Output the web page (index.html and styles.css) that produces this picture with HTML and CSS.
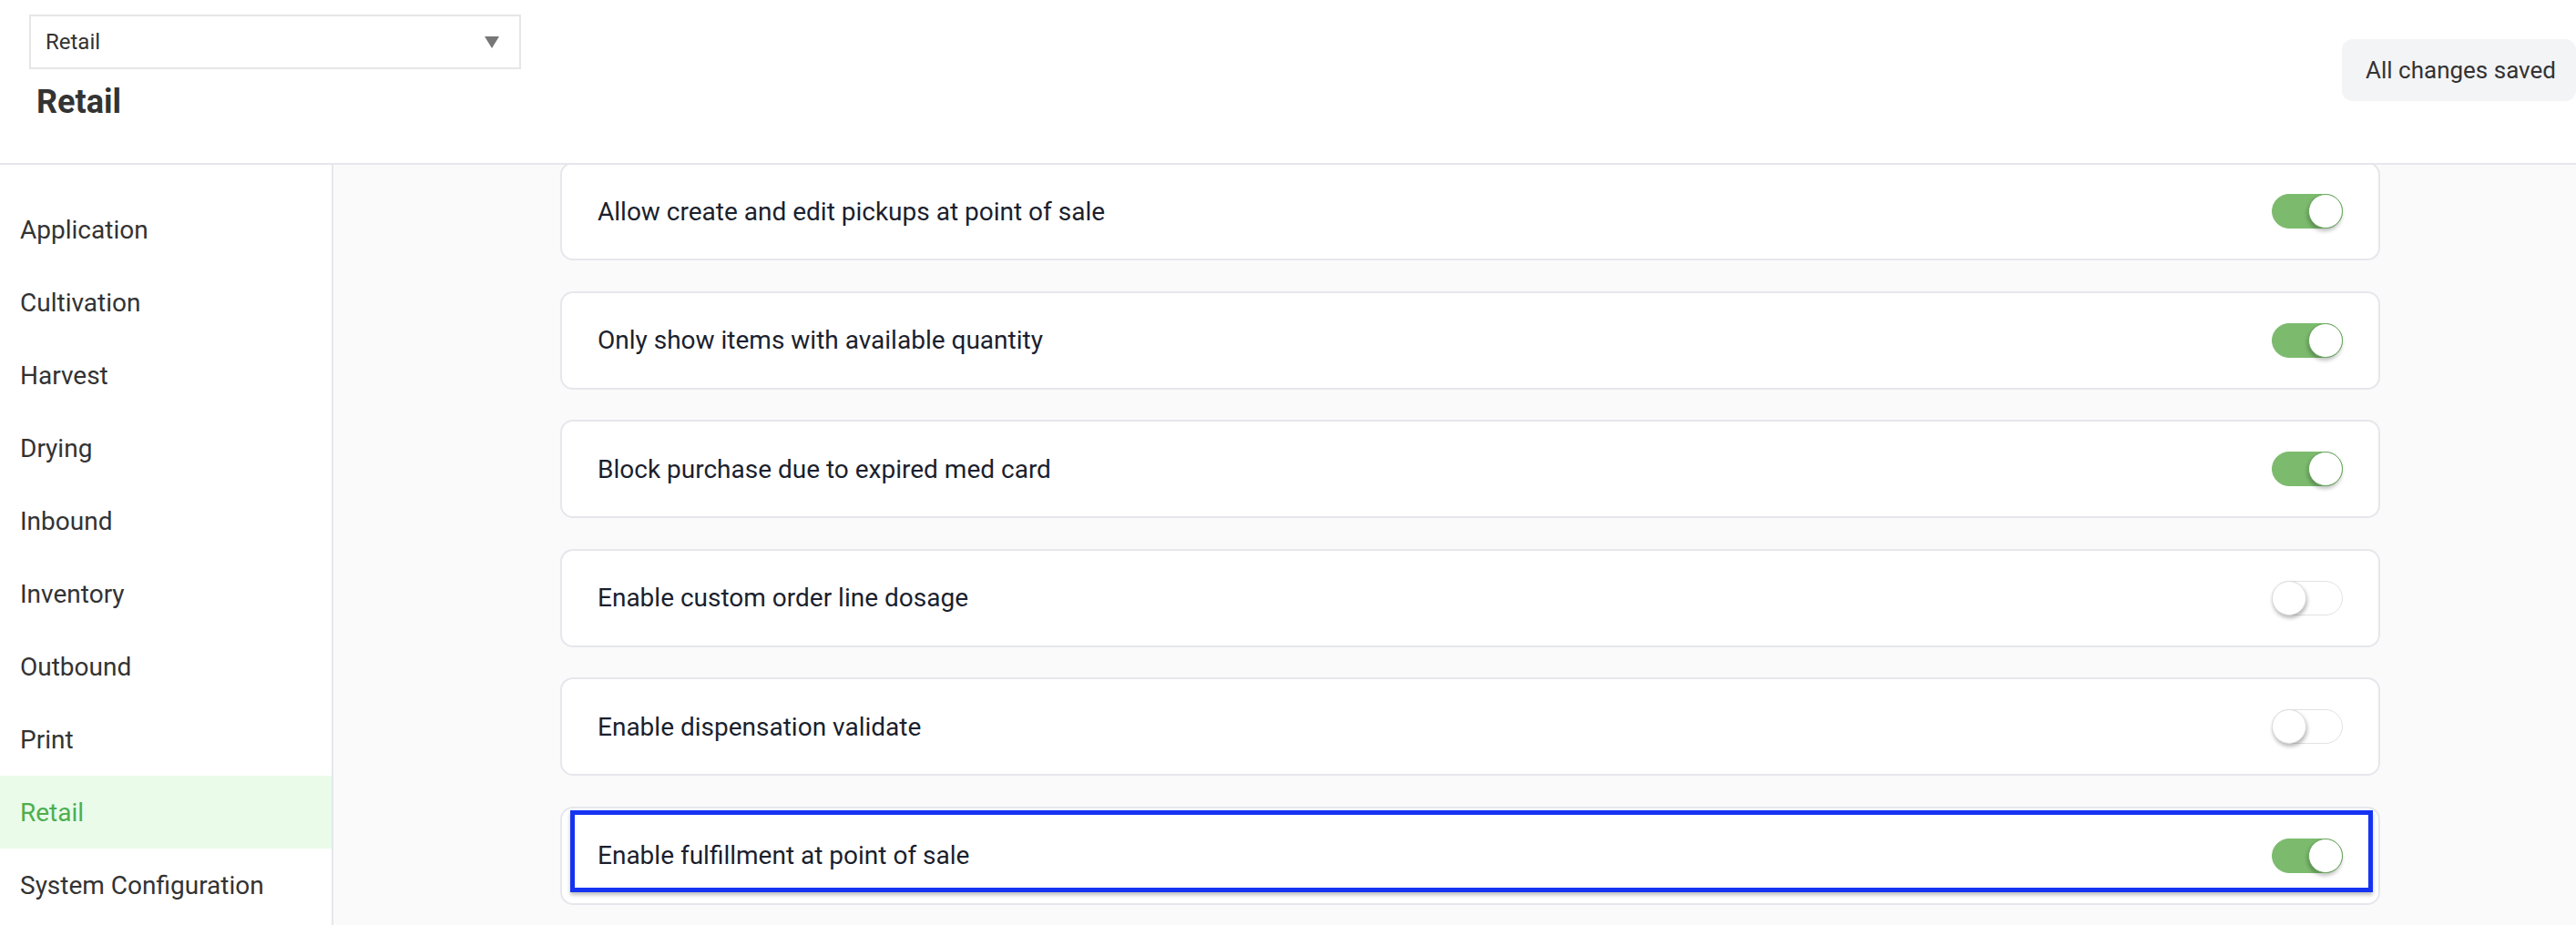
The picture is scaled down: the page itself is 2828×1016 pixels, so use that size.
FILE: index.html
```html
<html>
<head>
  <title>Settings - Retail</title>
  <link rel="stylesheet" href="styles.css">
</head>
<body>
  <div class="header">
    <div class="header-left">
      <div class="select">
        <span class="select-value">Retail</span>
        <span class="select-arrow"></span>
      </div>
      <div class="page-title">Retail</div>
    </div>
    <div class="save-state">All changes saved</div>
  </div>

  <div class="body">
    <div class="sidebar">
      <div class="nav-item">Application</div>
      <div class="nav-item">Cultivation</div>
      <div class="nav-item">Harvest</div>
      <div class="nav-item">Drying</div>
      <div class="nav-item">Inbound</div>
      <div class="nav-item">Inventory</div>
      <div class="nav-item">Outbound</div>
      <div class="nav-item">Print</div>
      <div class="nav-item active">Retail</div>
      <div class="nav-item">System Configuration</div>
    </div>

    <div class="main">
      <div class="settings">
        <div class="setting">
          <span class="label">Allow create and edit pickups at point of sale</span>
          <span class="switch on"><span class="knob"></span></span>
        </div>
        <div class="setting">
          <span class="label">Only show items with available quantity</span>
          <span class="switch on"><span class="knob"></span></span>
        </div>
        <div class="setting">
          <span class="label">Block purchase due to expired med card</span>
          <span class="switch on"><span class="knob"></span></span>
        </div>
        <div class="setting">
          <span class="label">Enable custom order line dosage</span>
          <span class="switch"><span class="knob"></span></span>
        </div>
        <div class="setting">
          <span class="label">Enable dispensation validate</span>
          <span class="switch"><span class="knob"></span></span>
        </div>
        <div class="setting focused">
          <span class="label">Enable fulfillment at point of sale</span>
          <span class="switch on"><span class="knob"></span></span>
          <span class="focus-ring"></span>
        </div>
      </div>
    </div>
  </div>
</body>
</html>
```

FILE: styles.css
```css
html, body {
  margin: 0;
  height: 100%;
}

body {
  font-family: Roboto, "Liberation Sans", sans-serif;
  background: #ffffff;
  color: #333333;
  display: flex;
  flex-direction: column;
  overflow: hidden;
}

/* top bar */
.header {
  height: 181px;
  box-sizing: border-box;
  border-bottom: 2px solid #e6e7ec;
  display: flex;
  justify-content: space-between;
  align-items: flex-start;
  flex-shrink: 0;
}

.header-left {
  padding: 16px 0 0 32px;
}

.select {
  width: 540px;
  height: 60px;
  box-sizing: border-box;
  border: 2px solid #e6e6e6;
  display: flex;
  align-items: center;
  justify-content: space-between;
  padding: 0 22px 0 16px;
  font-size: 24px;
  color: #333333;
}

.select-arrow {
  width: 0;
  height: 0;
  border-left: 8px solid transparent;
  border-right: 8px solid transparent;
  border-top: 13px solid #777777;
}

.page-title {
  margin: 15px 0 0 8px;
  font-size: 36px;
  font-weight: bold;
  color: #333333;
}

.save-state {
  margin-top: 43px;
  height: 68px;
  box-sizing: border-box;
  padding: 0 22px 0 26px;
  display: flex;
  align-items: center;
  background: #f3f4f6;
  border-radius: 12px;
  font-size: 26px;
  color: #333333;
}

/* sidebar + content */
.body {
  flex: 1;
  display: flex;
  min-height: 0;
}

.sidebar {
  width: 366px;
  box-sizing: border-box;
  border-right: 2px solid #e6e7ec;
  padding-top: 31px;
  flex-shrink: 0;
}

.nav-item {
  height: 80px;
  display: flex;
  align-items: center;
  padding-left: 22px;
  font-size: 28px;
  color: #333333;
}

.nav-item.active {
  background: #eafbea;
  color: #4caf50;
}

.main {
  flex: 1;
  background: #fafafa;
  overflow: hidden;
}

.settings {
  width: 1998px;
  margin: -3px 0 0 249px;
  display: flex;
  flex-direction: column;
  gap: 33.6px;
}

.setting {
  position: relative;
  height: 108px;
  box-sizing: border-box;
  border: 2px solid #e6e7ec;
  border-radius: 14px;
  background: #ffffff;
  padding: 0 39px;
  display: flex;
  align-items: center;
  justify-content: space-between;
}

.label {
  font-size: 28px;
  color: #1b1f2e;
}

/* toggle switch */
.switch {
  position: relative;
  width: 78px;
  height: 38px;
  box-sizing: border-box;
  border-radius: 19px;
  border: 1px solid #e2e2e2;
  background: #ffffff;
}

.switch .knob {
  position: absolute;
  top: -1px;
  left: -1px;
  width: 38px;
  height: 38px;
  box-sizing: border-box;
  border-radius: 50%;
  background: #ffffff;
  border: 1px solid #dddddd;
  box-shadow: 1px 3px 4px rgba(0, 0, 0, 0.28);
}

.switch.on {
  background: #7cbb6e;
  border-color: #7cbb6e;
}

.switch.on .knob {
  left: auto;
  right: -1px;
  border-color: #6aa85e;
  box-shadow: -1px 3px 4px rgba(0, 0, 0, 0.25);
}

/* keyboard focus highlight on the active row */
.focus-ring {
  position: absolute;
  top: 2px;
  left: 9px;
  right: 6px;
  bottom: 12px;
  border: 5px solid #1633f2;
  box-shadow: 0 3px 4px rgba(0, 0, 0, 0.25);
  pointer-events: none;
}
```
